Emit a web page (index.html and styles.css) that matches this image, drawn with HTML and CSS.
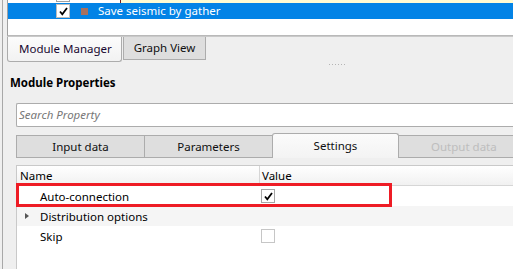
FILE: index.html
```html
<!DOCTYPE html>
<html>
<head>
<meta charset="utf-8">
<link rel="stylesheet" href="styles.css">
</head>
<body>
<div class="app">
  <div class="main">
    <div class="tree">
      <div class="row prev">
        <div class="prev-left"><span class="prev-box"></span></div>
        <div class="prev-right"></div>
      </div>
      <div class="row sel">
        <span class="cb checked"><svg width="11" height="11" viewBox="0 0 11 11"><path d="M2 5.5 L4.3 8.3 L9 2" fill="none" stroke="#000" stroke-width="1.8"/></svg></span>
        <span class="swatch"></span>
        <span class="sel-text">Save seismic by gather</span>
      </div>
    </div>
    <div class="bottom-tabs">
      <div class="btab active">Module Manager</div>
      <div class="btab">Graph View</div>
    </div>
    <div class="splitter"><span></span><span></span><span></span><span></span><span></span><span></span></div>
    <div class="props">
      <div class="title">Module Properties</div>
      <div class="search">Search Property</div>
      <div class="tabs">
        <div class="tab">Input data</div>
        <div class="tab">Parameters</div>
        <div class="tab current">Settings</div>
        <div class="tab disabled">Output data</div>
      </div>
      <div class="table">
        <div class="thead">
          <div class="c1">Name</div>
          <div class="c2">Value</div>
        </div>
        <div class="trow">
          <div class="c1 ind">Auto-connection</div>
          <div class="c2"><span class="cb small checked"><svg width="11" height="11" viewBox="0 0 11 11"><path d="M2 5.5 L4.3 8.3 L9 2" fill="none" stroke="#000" stroke-width="1.8"/></svg></span></div>
        </div>
        <div class="trow alt">
          <div class="c1"><span class="arrow"></span><span class="ind2">Distribution options</span></div>
          <div class="c2"></div>
        </div>
        <div class="trow">
          <div class="c1 ind">Skip</div>
          <div class="c2"><span class="cb small empty"></span></div>
        </div>
        <div class="highlight"></div>
      </div>
    </div>
  </div>
</div>
</body>
</html>
```

FILE: styles.css
```css
* { box-sizing: border-box; }
html, body { margin: 0; padding: 0; }
body {
  width: 513px;
  height: 269px;
  overflow: hidden;
  background: #efefef;
  font-family: "Noto Sans", "Open Sans", sans-serif;
  font-size: 11.5px;
  color: #000;
  white-space: nowrap;
}
.app {
  height: 269px;
  padding-left: 2px;
}
.main {
  height: 269px;
  border-left: 1px solid #a8a8a8;
  position: relative;
}
.tree {
  margin-left: 4px;
  height: 36px;
  background: #fff;
  border-left: 1px solid #a0a0a0;
  border-bottom: 1px solid #b9b9b9;
}
.row { display: flex; }
.prev { height: 3px; }
.prev-left { width: 112px; position: relative; }
.prev-box {
  position: absolute;
  left: 48px;
  top: 0;
  width: 14px;
  height: 2px;
  border: 1px solid #a0a0a0;
  border-top: none;
}
.prev-right {
  flex: 1;
  background: #fffbd3;
  border-left: 1px solid #7a1a1a;
}
.sel {
  height: 16px;
  background: #0383e6;
  align-items: center;
  padding-left: 48px;
}
.cb {
  display: inline-flex;
  align-items: center;
  justify-content: center;
  width: 14px;
  height: 14px;
  background: #fff;
  border: 1px solid #8e8e8e;
}
.sel .cb { border-color: #bcbcbc; }
.swatch {
  width: 7px;
  height: 7px;
  background: #a8705f;
  margin-left: 11px;
}
.sel-text {
  color: #fff;
  margin-left: 10px;
  line-height: 16px;
}
.bottom-tabs {
  display: flex;
  margin-left: 4px;
  height: 25px;
  border-top: 1px solid #c9c9c9;
  align-items: flex-start;
}
.btab {
  height: 23px;
  width: 83px;
  text-align: center;
  background: #dedede;
  border: 1px solid #acacac;
  border-top: none;
  line-height: 21px;
  color: #101010;
  margin-left: 1px;
}
.btab.active {
  height: 25px;
  background: linear-gradient(#fcfcfc, #f2f2f2);
  border-radius: 0 0 3px 3px;
  padding: 0 0 0 11px;
  margin-left: 0;
  line-height: 23px;
  color: #180830;
  width: 115px;
  text-align: left;
}
.splitter {
  display: flex;
  gap: 2px;
  margin-left: 326px;
  margin-top: 3px;
  height: 1px;
}
.splitter span {
  width: 1px;
  height: 1px;
  background: #b4b4b4;
}
.props {
  padding-left: 7px;
}
.title {
  font-weight: bold;
  margin-top: 10px;
  line-height: 16px;
  height: 16px;
}
.search {
  margin-top: 12px;
  margin-left: 6px;
  height: 24px;
  border: 1px solid #acacac;
  border-right: none;
  border-radius: 2px 0 0 2px;
  background: #fff;
  font-style: italic;
  color: #777;
  line-height: 22px;
  padding-left: 2px;
}
.tabs {
  display: flex;
  margin-left: 6px;
  margin-top: 6px;
  height: 25px;
  align-items: flex-end;
}
.tab {
  width: 128px;
  height: 23px;
  background: #dedede;
  border: 1px solid #acacac;
  border-right: none;
  text-align: center;
  line-height: 21px;
  color: #101010;
}
.tab.current {
  height: 25px;
  width: 127px;
  background: linear-gradient(#fbfbfb, #f3f3f3);
  border-right: 1px solid #acacac;
  border-bottom: none;
  border-radius: 3px 3px 0 0;
  line-height: 23px;
}
.tab.disabled {
  flex: 1;
  border-left: none;
  color: #bdbdbd;
  text-align: left;
  padding-left: 32px;
}
.table {
  position: relative;
  margin-left: 6px;
  margin-top: 7px;
  height: 110px;
  background: #fff;
  border-top: 1px solid #c9c9c9;
  border-left: 1px solid #c9c9c9;
}
.thead {
  display: flex;
  height: 20px;
  background: linear-gradient(#ffffff, #f1f1f1);
  border-bottom: 1px solid #d6d6d6;
}
.thead .c1 { width: 243px; padding-left: 3px; line-height: 19px; border-right: 1px solid #d6d6d6; }
.thead .c2 { flex: 1; padding-left: 2px; line-height: 19px; }
.trow { display: flex; height: 20px; align-items: center; }
.trow.alt { background: #f5f5f5; }
.trow .c1 { width: 243px; display: flex; align-items: center; }
.trow .c1.ind { padding-left: 23px; }
.trow .c2 { flex: 1; padding-left: 1px; display: flex; align-items: center; }
.cb.small { width: 14px; height: 14px; border-color: #a6a6a6; }
.cb.empty { border-color: #c6c6c6; }
.arrow {
  width: 0; height: 0;
  margin-left: 8px;
  border-top: 3.5px solid transparent;
  border-bottom: 3.5px solid transparent;
  border-left: 4px solid #555;
}
.ind2 { margin-left: 11px; }
.highlight {
  position: absolute;
  left: -1px;
  top: 17px;
  width: 376px;
  height: 24px;
  border: 3px solid #ee1c25;
}
```
